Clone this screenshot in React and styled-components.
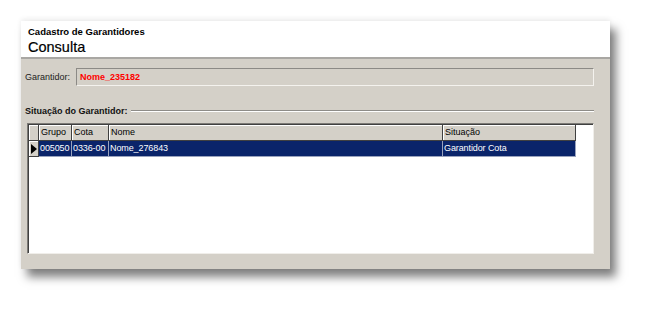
import React from "react";
import styled, { createGlobalStyle } from "styled-components";

const GlobalStyle = createGlobalStyle`
  body {
    margin: 0;
    background: #ffffff;
    font-family: "Liberation Sans", Arial, sans-serif;
  }
`;

const columns = [
  { key: "grupo", title: "Grupo", width: 33 },
  { key: "cota", title: "Cota", width: 37 },
  { key: "nome", title: "Nome", width: 334 },
  { key: "situacao", title: "Situação", width: 133 },
];

const rows = [
  { grupo: "005050", cota: "0336-00", nome: "Nome_276843", situacao: "Garantidor Cota" },
];

const template = `10px ${columns.map((c) => c.width + "px").join(" ")}`;

export default function App() {
  return (
    <Page>
      <GlobalStyle />
      <Window>
        <Header>
          <SubTitle>Cadastro de Garantidores</SubTitle>
          <Title>Consulta</Title>
        </Header>
        <Body>
          <FieldRow>
            <Label>Garantidor:</Label>
            <Input>Nome_235182</Input>
          </FieldRow>
          <Section>
            <SectionTitle>Situação do Garantidor:</SectionTitle>
            <Groove />
          </Section>
          <DataGrid>
            <GridRow>
              <IndicatorCell />
              {columns.map((c) => (
                <HeadCell key={c.key}>{c.title}</HeadCell>
              ))}
            </GridRow>
            {rows.map((r, i) => (
              <GridRow key={i}>
                <IndicatorCell>
                  <Arrow />
                </IndicatorCell>
                {columns.map((c) => (
                  <Cell key={c.key} selected>
                    {r[c.key]}
                  </Cell>
                ))}
              </GridRow>
            ))}
          </DataGrid>
        </Body>
      </Window>
    </Page>
  );
}

const Page = styled.div`
  padding: 21px;
`;
const Window = styled.div`
  width: 589px;
  height: 248px;
  display: flex;
  flex-direction: column;
  background: #d4d0c8;
  box-shadow: 6px 8px 9px rgba(0, 0, 0, 0.5), 0 -2px 5px rgba(0, 0, 0, 0.07);
`;
const Header = styled.div`
  height: 38px;
  padding: 5px 0 0 7px;
  box-sizing: border-box;
  background: #ffffff;
  border-bottom: 2px solid #a9a7a3;
`;
const SubTitle = styled.div`
  font-size: 9.5px;
  line-height: 12px;
  font-weight: bold;
  color: #000;
`;
const Title = styled.div`
  font-size: 14.5px;
  line-height: 18px;
  color: #000;
  -webkit-text-stroke: 0.2px #000;
`;
const Body = styled.div`
  flex: 1;
  display: flex;
  flex-direction: column;
  padding: 9px 16px 15px 4px;
  min-height: 0;
`;
const FieldRow = styled.div`
  display: flex;
  align-items: center;
  height: 18px;
`;
const Label = styled.div`
  width: 51px;
  font-size: 9px;
  color: #222;
`;
const Input = styled.div`
  flex: 1;
  height: 18px;
  box-sizing: border-box;
  border-top: 1px solid #8c8a86;
  border-left: 1px solid #8c8a86;
  border-right: 1px solid #f4f2ee;
  border-bottom: 1px solid #f4f2ee;
  padding-left: 3px;
  font-size: 9px;
  font-weight: bold;
  line-height: 16px;
  color: #ff0000;
`;
const Section = styled.div`
  display: flex;
  align-items: center;
  height: 12px;
  margin-top: 19px;
`;
const SectionTitle = styled.div`
  font-size: 9px;
  font-weight: bold;
  color: #111;
  white-space: nowrap;
`;
const Groove = styled.div`
  flex: 1;
  margin-left: 3px;
  border-top: 1px solid #8e8c88;
  border-bottom: 1px solid #ffffff;
`;
const DataGrid = styled.div`
  flex: 1;
  margin: 6px 0 0 2px;
  background: #ffffff;
  border-top: 1px solid #7c7a76;
  border-left: 1px solid #7c7a76;
  border-right: 1px solid #f0eeea;
  border-bottom: 1px solid #f0eeea;
  box-shadow: inset 1px 1px 0 #404040;
  padding: 1px 0 0 1px;
`;
const GridRow = styled.div`
  display: grid;
  grid-template-columns: ${template};
  height: 16px;
`;
const IndicatorCell = styled.div`
  background: #d4d0c8;
  box-sizing: border-box;
  border-right: 1px solid #404040;
  border-bottom: 1px solid #404040;
  box-shadow: inset 1px 1px 0 #ffffff;
  display: flex;
  align-items: center;
  justify-content: center;
`;
const HeadCell = styled.div`
  background: #d4d0c8;
  box-sizing: border-box;
  border-right: 1px solid #404040;
  border-bottom: 1px solid #404040;
  box-shadow: inset 1px 1px 0 #ffffff;
  padding-left: 2px;
  font-size: 9px;
  line-height: 15px;
  color: #000;
  white-space: nowrap;
  overflow: hidden;
`;
const Cell = styled.div`
  background: ${(p) => (p.selected ? "#0a246a" : "#ffffff")};
  color: ${(p) => (p.selected ? "#ffffff" : "#000000")};
  box-sizing: border-box;
  border-right: 1px solid #9aa3bd;
  border-bottom: 1px solid #9aa3bd;
  padding-left: 1px;
  font-size: 9px;
  letter-spacing: -0.1px;
  line-height: 15px;
  white-space: nowrap;
  overflow: hidden;
`;
const Arrow = styled.div`
  width: 0;
  height: 0;
  border-top: 5px solid transparent;
  border-bottom: 5px solid transparent;
  border-left: 6px solid #000000;
`;
